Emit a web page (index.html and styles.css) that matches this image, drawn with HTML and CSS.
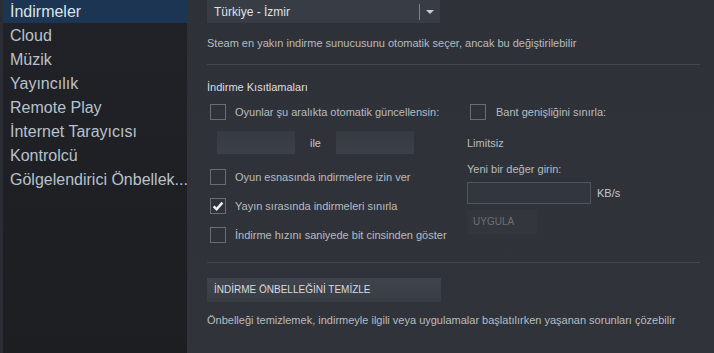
FILE: index.html
```html
<!DOCTYPE html>
<html lang="tr">
<head>
  <meta charset="UTF-8">
  <title>Ayarlar - İndirmeler</title>
  <link rel="stylesheet" href="styles.css">
</head>
<body>
  <div class="window">
    <div class="edge"></div>
    <nav class="sidebar">
      <div class="nav-item active">İndirmeler</div>
      <div class="nav-item">Cloud</div>
      <div class="nav-item">Müzik</div>
      <div class="nav-item">Yayıncılık</div>
      <div class="nav-item">Remote Play</div>
      <div class="nav-item">İnternet Tarayıcısı</div>
      <div class="nav-item">Kontrolcü</div>
      <div class="nav-item">Gölgelendirici Önbellek...</div>
    </nav>

    <main class="content">
      <div class="select">
        <span class="select-value">Türkiye - İzmir</span>
        <span class="select-sep"></span>
        <span class="select-arrow"></span>
      </div>
      <p class="hint">Steam en yakın indirme sunucusunu otomatik seçer, ancak bu değiştirilebilir</p>

      <div class="divider"></div>

      <h3 class="section-title">İndirme Kısıtlamaları</h3>

      <div class="limits">
        <div class="col-left">
          <label class="check">
            <span class="box"></span>
            <span>Oyunlar şu aralıkta otomatik güncellensin:</span>
          </label>
          <div class="times">
            <div class="time-input"></div>
            <span class="time-sep">ile</span>
            <div class="time-input"></div>
          </div>
          <label class="check spaced first">
            <span class="box"></span>
            <span>Oyun esnasında indirmelere izin ver</span>
          </label>
          <label class="check spaced">
            <span class="box">
              <svg viewBox="0 0 14 14" width="14" height="14"><path d="M2.6 7.4 L5.6 10.2 L11.4 3.6" fill="none" stroke="#f2f2f2" stroke-width="2.4"/></svg>
            </span>
            <span>Yayın sırasında indirmeleri sınırla</span>
          </label>
          <label class="check spaced">
            <span class="box"></span>
            <span>İndirme hızını saniyede bit cinsinden göster</span>
          </label>
        </div>

        <div class="col-right">
          <label class="check">
            <span class="box"></span>
            <span>Bant genişliğini sınırla:</span>
          </label>
          <div class="limit-value">Limitsiz</div>
          <div class="limit-label">Yeni bir değer girin:</div>
          <div class="rate">
            <div class="rate-input"></div>
            <span class="rate-unit">KB/s</span>
          </div>
          <div class="btn-apply">UYGULA</div>
        </div>
      </div>

      <div class="divider bottom"></div>

      <div class="btn-clear">İNDİRME ÖNBELLEĞİNİ TEMİZLE</div>
      <p class="hint clear-hint">Önbelleği temizlemek, indirmeyle ilgili veya uygulamalar başlatılırken yaşanan sorunları çözebilir</p>
    </main>
  </div>
</body>
</html>
```

FILE: styles.css
```css
html, body {
  margin: 0;
  height: 100%;
}

body {
  font-family: Arial, 'Liberation Sans', sans-serif;
  background: #2f3238;
  overflow: hidden;
}

.window {
  display: flex;
  height: 353px;
}

.edge {
  width: 3px;
  flex-shrink: 0;
  background: #2a2d33;
}

.sidebar {
  width: 184px;
  background: linear-gradient(180deg, #202227, #1c1e22);
  flex-shrink: 0;
}

.nav-item {
  height: 24px;
  line-height: 24px;
  padding-left: 7px;
  font-size: 16px;
  color: #b9c2cc;
  white-space: nowrap;
  overflow: hidden;
}

.nav-item.active {
  background: #1b3552;
  color: #dbe3ec;
  height: 23px;
  line-height: 23px;
  margin-bottom: 1px;
}

.content {
  flex: 1;
  min-width: 0;
  padding-left: 20px;
  padding-right: 14px;
  background: linear-gradient(180deg, #2e3137, #30343a);
  color: #b8bcc0;
  font-size: 11px;
}

.select {
  width: 233px;
  height: 23px;
  background: #383c44;
  display: flex;
  align-items: center;
  box-sizing: border-box;
  padding-left: 7px;
}

.select-value {
  flex: 1;
  font-size: 12px;
  color: #dfe2e6;
}

.select-sep {
  width: 1px;
  height: 16px;
  background: #7e838a;
}

.select-arrow {
  width: 0;
  height: 0;
  border-left: 4px solid transparent;
  border-right: 4px solid transparent;
  border-top: 4px solid #c9ccd0;
  margin: 0 6px 0 6px;
}

.hint {
  margin: 13px 0 0;
  line-height: 14px;
  white-space: nowrap;
}

.divider {
  height: 1px;
  background: #43474e;
  margin-top: 14px;
}

.section-title {
  margin: 15px 0 0;
  font-size: 11px;
  font-weight: normal;
  line-height: 14px;
  color: #dcdfe2;
}

.limits {
  display: flex;
  margin-top: 10px;
}

.col-left {
  width: 260px;
}

.check {
  display: flex;
  align-items: center;
  height: 16px;
  padding-left: 3px;
  gap: 9px;
  white-space: nowrap;
}

.box {
  width: 14px;
  height: 14px;
  border: 1px solid #6a6e74;
  display: flex;
  align-items: center;
  justify-content: center;
  flex-shrink: 0;
}

.check.spaced {
  margin-top: 13px;
}

.check.first {
  margin-top: 15px;
}

.times {
  display: flex;
  align-items: center;
  margin-top: 11px;
  padding-left: 10px;
}

.time-input {
  width: 78px;
  height: 23px;
  background: linear-gradient(180deg, #363a41, #3b3f47);
}

.time-sep {
  width: 41px;
  text-align: center;
  color: #c4c7cb;
}

.col-right {
  flex: 1;
}

.col-right .check {
  padding-left: 3px;
  gap: 10px;
}

.limit-value {
  margin-top: 16px;
  line-height: 14px;
}

.limit-label {
  margin-top: 12px;
  line-height: 14px;
}

.rate {
  display: flex;
  align-items: center;
  margin-top: 6px;
  gap: 6px;
}

.rate-input {
  width: 122px;
  height: 20px;
  border: 1px solid #50555d;
  background: #32363d;
}

.rate-unit {
  color: #c4c7cb;
}

.btn-apply {
  width: 70px;
  height: 24px;
  line-height: 24px;
  margin-top: 6px;
  box-sizing: border-box;
  padding-left: 6px;
  background: #33373d;
  color: #6c7077;
  font-size: 10px;
}

.divider.bottom {
  margin-top: 19px;
}

.btn-clear {
  width: 234px;
  height: 24px;
  line-height: 24px;
  margin-top: 15px;
  box-sizing: border-box;
  padding-left: 7px;
  background: linear-gradient(180deg, #40444d, #383c43);
  color: #d9dce0;
  font-size: 10px;
}

.clear-hint {
  margin-top: 11px;
}
```
